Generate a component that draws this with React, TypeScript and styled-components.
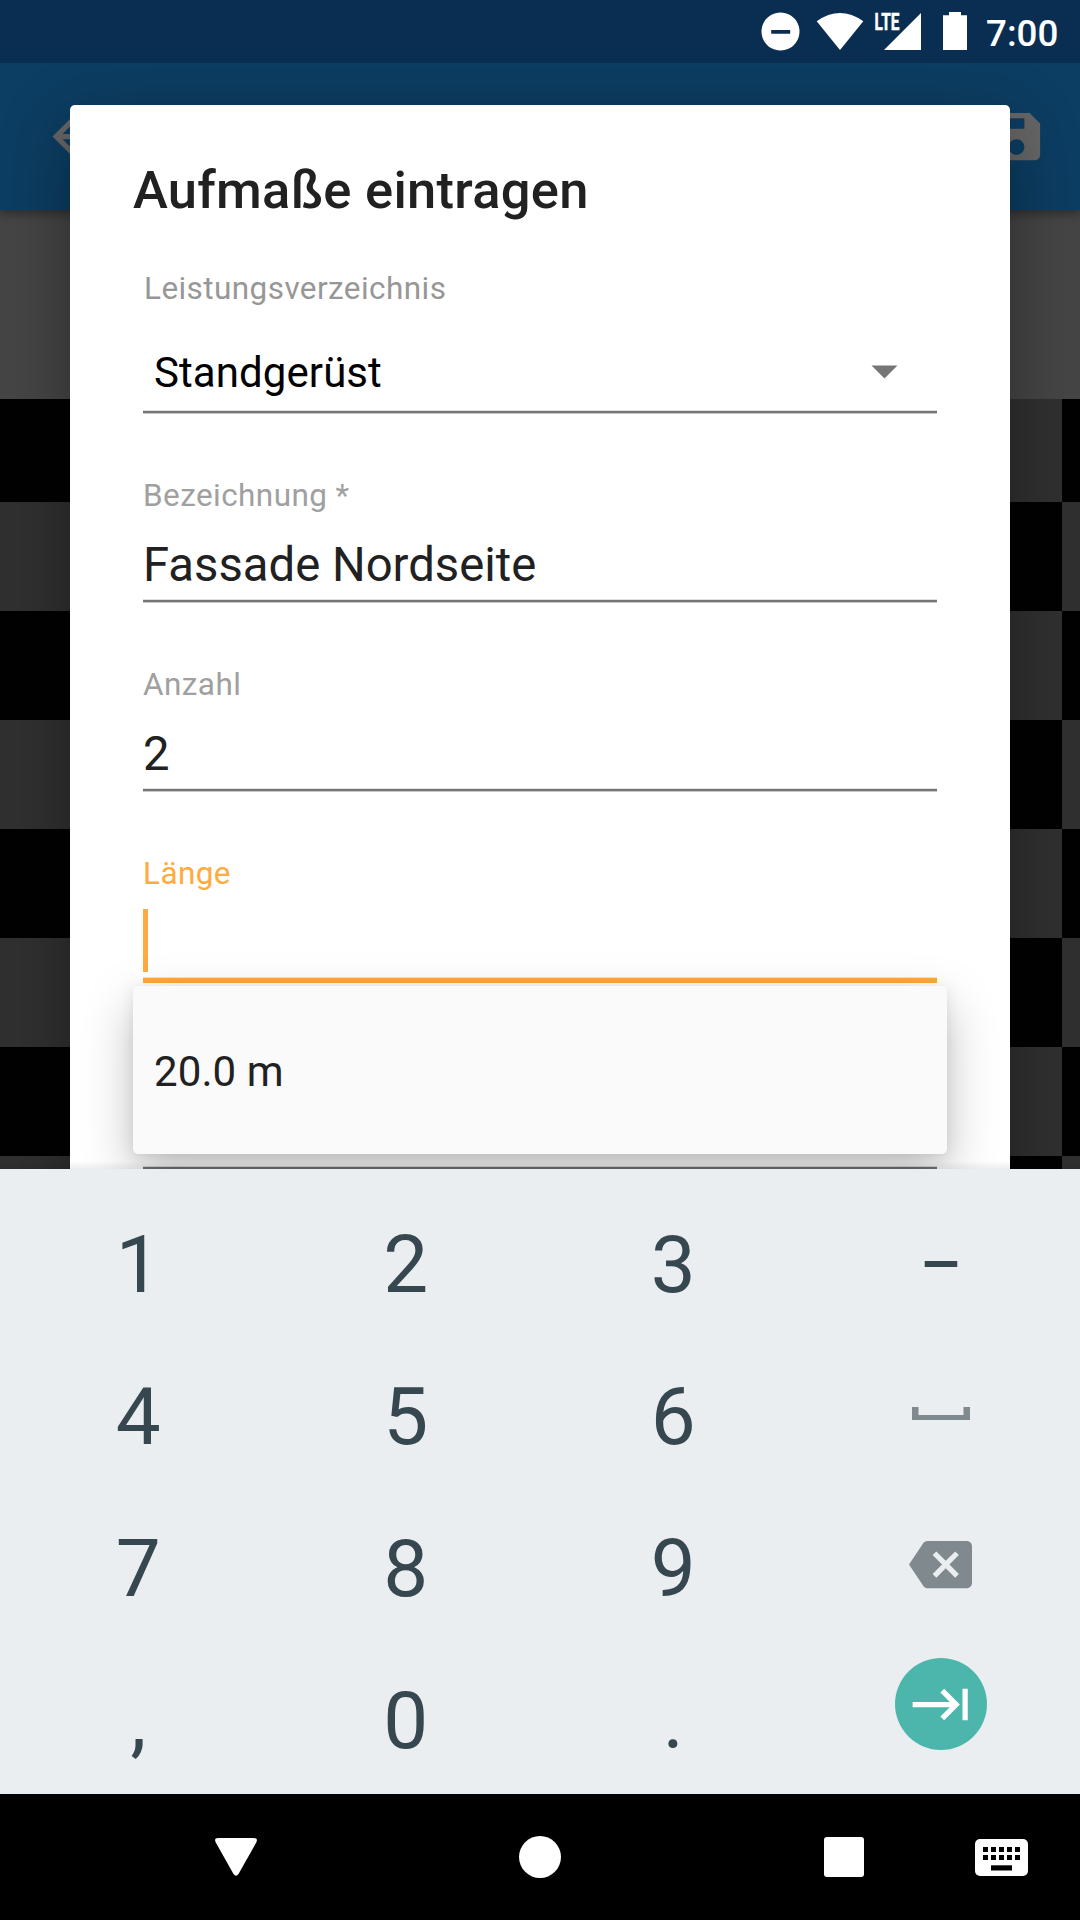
import React from "react";
import styled, { createGlobalStyle } from "styled-components";

const GlobalStyle = createGlobalStyle`
  *, *::before, *::after { box-sizing: border-box; }
  body { margin: 0; background: #000; }
`;

const Screen = styled.div`
  display: flex;
  flex-direction: column;
  width: 1080px;
  height: 1920px;
  overflow: hidden;
  font-family: Roboto, "Noto Sans", sans-serif;
`;

const AppArea = styled.main`
  position: relative;
  display: flex;
  flex-direction: column;
  height: 1169px;
  overflow: hidden;
`;

const StatusBar = styled.header`
  position: relative;
  z-index: 3;
  display: flex;
  justify-content: flex-end;
  height: 63px;
  flex: none;
  background: #0a2e52;
`;

const StatusIcons = styled.svg`
  width: 220px;
  height: 63px;
  overflow: visible;
`;

const Clock = styled.span`
  width: 95px;
  padding-left: 1px;
  color: #fff;
  font-size: 36.75px;
  font-weight: 500;
  line-height: 67px;
`;

const Toolbar = styled.div`
  position: relative;
  z-index: 1;
  display: flex;
  align-items: center;
  justify-content: space-between;
  height: 147px;
  flex: none;
  padding: 0 32px 1px 42px;
  background: #0c3d62;
  box-shadow: 0 3px 10px rgba(0, 0, 0, 0.4);
`;

const ToolbarIcon = styled.svg`
  width: 63px;
  height: 63px;
  fill: #666;
`;

const HeaderBand = styled.div`
  height: 189px;
  flex: none;
  background: #454545;
`;

const Canvas = styled.div`
  flex: 1;
  background: repeating-conic-gradient(#303030 0 25%, #020202 0 50%) -28px -6px / 218px 218px;
`;

const Dialog = styled.section`
  position: absolute;
  z-index: 2;
  top: 105px;
  left: 70px;
  width: 940px;
  height: 1300px;
  padding: 54px 63px 0;
  border-radius: 5px;
  background: #fff;
  box-shadow: 0 22px 66px rgba(0, 0, 0, 0.36);
`;

const Title = styled.h1`
  margin: 0 0 4px;
  height: 62px;
  color: #212121;
  font-size: 52.5px;
  font-weight: 500;
  letter-spacing: 0.28px;
  line-height: 62px;
`;

const Form = styled.div`
  display: flex;
  flex-direction: column;
  padding: 0 10px;
`;

const Field = styled.div<{ $select?: boolean }>`
  position: relative;
  display: flex;
  flex-direction: column;
  height: 189px;
  padding-top: ${(p) => (p.$select ? 45 : 63)}px;
`;

const Label = styled.label<{ $tone?: string; $indent?: number }>`
  height: 38px;
  padding-left: ${(p) => p.$indent ?? 0}px;
  color: ${(p) => p.$tone ?? "#a0a0a0"};
  font-size: 31.5px;
  letter-spacing: 0.42px;
  line-height: 38px;
`;

const Value = styled.div`
  height: 56px;
  margin-top: 22px;
  color: #212121;
  font-size: 47.25px;
  line-height: 56px;
`;

const Select = styled.div`
  display: flex;
  align-items: center;
  justify-content: space-between;
  height: 50px;
  margin-top: 40px;
  padding: 0 39px 0 11px;
  color: #000;
  font-size: 42px;
  letter-spacing: 0.08px;
  line-height: 50px;
`;

const Caret = styled.svg`
  width: 27px;
  height: 14px;
  margin-top: -2px;
  fill: #767676;
`;

const Underline = styled.div`
  height: 4px;
  margin-top: auto;
  background: linear-gradient(#dfdfdf 0 1px, #767676 1px 3px, #c8c8c8 3px);
`;

const FocusLine = styled.div`
  height: 6px;
  margin: auto 0 -2px;
  background: linear-gradient(#f0e6d8 0 1px, #ffab40 1px);
`;

const TextCursor = styled.div`
  width: 5px;
  height: 63px;
  margin-top: 16px;
  background: #ffab40;
`;

const Suggestions = styled.div`
  position: absolute;
  top: 194px;
  left: -10px;
  z-index: 1;
  width: 814px;
  height: 168px;
  padding-left: 21px;
  border-radius: 5px;
  background: #fafafa;
  color: #212121;
  font-size: 42px;
  letter-spacing: 0.1px;
  line-height: 171px;
  box-shadow: 0 20px 50px rgba(0, 0, 0, 0.25), 0 2px 14px rgba(0, 0, 0, 0.09);
`;

const Keyboard = styled.section`
  position: relative;
  display: grid;
  grid-template-columns: repeat(4, 267.5px);
  grid-auto-rows: 152px;
  height: 625px;
  flex: none;
  padding: 20px 0 0 4.5px;
  overflow: hidden;
  background: #eaeef1;
`;

const KeyboardShade = styled.div`
  position: absolute;
  z-index: 4;
  right: 0;
  bottom: 0;
  left: 0;
  height: 8px;
  background: linear-gradient(rgba(0, 0, 0, 0), rgba(0, 0, 0, 0.07));
`;

const Key = styled.div<{ $raise?: number }>`
  display: flex;
  align-items: center;
  justify-content: center;
  padding-bottom: ${(p) => p.$raise ?? 0}px;
  color: #37474f;
  font-size: 80px;
  line-height: 94px;
`;

const DashGlyph = styled.span`
  transform: scaleX(0.83);
`;

const KeyIcon = styled.svg<{ $w: number; $h: number }>`
  width: ${(p) => p.$w}px;
  height: ${(p) => p.$h}px;
  fill: #80898e;
`;

const NextButton = styled.div`
  display: flex;
  align-items: center;
  justify-content: center;
  width: 92px;
  height: 92px;
  margin-left: 1px;
  background: #4db6ac;
  border-radius: 50%;
`;

const NextIcon = styled.svg`
  width: 63px;
  height: 63px;
  fill: #fff;
`;

const NavBar = styled.nav`
  display: flex;
  align-items: center;
  height: 126px;
  flex: none;
  padding-left: 215px;
  background: #000;
`;

const NavIcon = styled.svg<{ $w: number; $h: number; $gap: number }>`
  width: ${(p) => p.$w}px;
  height: ${(p) => p.$h}px;
  margin-left: ${(p) => p.$gap}px;
  fill: #fff;
`;

const digits = [
  ["1", "2", "3"],
  ["4", "5", "6"],
  ["7", "8", "9"],
  [",", "0", "."],
];

const sideKeys = [
  <Key key="dash">
    <DashGlyph>–</DashGlyph>
  </Key>,
  <Key key="space" $raise={7}>
    <KeyIcon $w={58} $h={13} viewBox="0 0 58 13">
      <path d="M0 0h6.5v8h45V0H58v13H0z" />
    </KeyIcon>
  </Key>,
  <Key key="backspace" $raise={9}>
    <KeyIcon $w={63} $h={63} viewBox="0 0 24 24">
      <path d="M22 3H7c-.69 0-1.23.35-1.59.88L0 12l5.41 8.11c.36.53.9.89 1.59.89h15c1.1 0 2-.9 2-2V5c0-1.1-.9-2-2-2zm-3 12.59L17.59 17 14 13.41 10.41 17 9 15.59 12.59 12 9 8.41 10.41 7 14 10.59 17.59 7 19 8.41 15.41 12 19 15.59z" />
    </KeyIcon>
  </Key>,
  <Key key="next" $raise={34}>
    <NextButton>
      <NextIcon viewBox="0 0 24 24">
        <path d="M11.59 7.41L15.17 11H1v2h14.17l-3.59 3.59L13 18l6-6-6-6-1.41 1.41zM20 6v12h2V6h-2z" />
      </NextIcon>
    </NextButton>
  </Key>,
];

export default function App() {
  return (
    <>
      <GlobalStyle />
      <Screen>
        <AppArea>
          <StatusBar>
            <StatusIcons viewBox="0 0 220 63" fill="#fff">
              <path
                fillRule="evenodd"
                d="M15.5 12.5a19 19 0 1 0 .01 0zM6.2 30h19v3.8h-19z"
              />
              <path d="M51.7 21.2Q75 4.8 98.3 21.2L75 50z" />
              <path d="M119 50h37V13z" />
              <path d="M178 15.2h6V12h12v3.2h6V50h-24z" />
              <text
                x="109.6"
                y="30"
                fontFamily="Roboto"
                fontWeight="700"
                fontSize="23"
                stroke="#fff"
                strokeWidth="0.5"
                textLength="24.8"
                lengthAdjust="spacingAndGlyphs"
              >
                LTE
              </text>
            </StatusIcons>
            <Clock>7:00</Clock>
          </StatusBar>
          <Toolbar>
            <ToolbarIcon viewBox="0 0 24 24">
              <path d="M20 11H7.83l5.59-5.59L12 4l-8 8 8 8 1.41-1.41L7.83 13H20v-2z" />
            </ToolbarIcon>
            <ToolbarIcon viewBox="0 0 24 24">
              <path d="M17 3H5c-1.11 0-2 .9-2 2v14c0 1.1.89 2 2 2h14c1.1 0 2-.9 2-2V7l-4-4zm-5 16c-1.66 0-3-1.34-3-3s1.34-3 3-3 3 1.34 3 3-1.34 3-3 3zm3-10H5V5h10v4z" />
            </ToolbarIcon>
          </Toolbar>
          <HeaderBand />
          <Canvas />
          <Dialog>
            <Title>Aufmaße eintragen</Title>
            <Form>
              <Field $select>
                <Label $tone="#979797" $indent={1}>
                  Leistungsverzeichnis
                </Label>
                <Select>
                  Standgerüst
                  <Caret viewBox="0 0 27 14">
                    <path d="M.5.5h26l-13 13z" />
                  </Caret>
                </Select>
                <Underline />
              </Field>
              <Field>
                <Label>Bezeichnung *</Label>
                <Value>Fassade Nordseite</Value>
                <Underline />
              </Field>
              <Field>
                <Label>Anzahl</Label>
                <Value>2</Value>
                <Underline />
              </Field>
              <Field>
                <Label $tone="#ffab40">Länge</Label>
                <TextCursor />
                <FocusLine />
                <Suggestions>20.0 m</Suggestions>
              </Field>
              <Field>
                <Underline />
              </Field>
            </Form>
          </Dialog>
          <KeyboardShade />
        </AppArea>
        <Keyboard>
          {digits.map((row, i) => (
            <React.Fragment key={i}>
              {row.map((d) => (
                <Key key={d}>{d}</Key>
              ))}
              {sideKeys[i]}
            </React.Fragment>
          ))}
        </Keyboard>
        <NavBar>
          <NavIcon $w={42} $h={38} $gap={0} viewBox="0 0 42 38">
            <path d="M3 0h36q4 0 2.5 4L23.5 36q-2.500 3.500-5 0L.5 4Q-1 0 3 0z" />
          </NavIcon>
          <NavIcon $w={42} $h={42} $gap={262} viewBox="0 0 42 42">
            <circle cx="21" cy="21" r="21" />
          </NavIcon>
          <NavIcon $w={40} $h={40} $gap={263} viewBox="0 0 40 40">
            <rect width="40" height="40" rx="3" />
          </NavIcon>
          <NavIcon $w={53} $h={37} $gap={111} viewBox="0 0 53 37">
            <rect width="53" height="37" rx="5" />
            <g fill="#000">
              {[8, 16, 24, 32, 40].map((x) => (
                <React.Fragment key={x}>
                  <rect x={x} y="8" width="5" height="5" />
                  <rect x={x} y="16" width="5" height="5" />
                </React.Fragment>
              ))}
              <rect x="16" y="26.300" width="21" height="5.200" />
            </g>
          </NavIcon>
        </NavBar>
      </Screen>
    </>
  );
}
